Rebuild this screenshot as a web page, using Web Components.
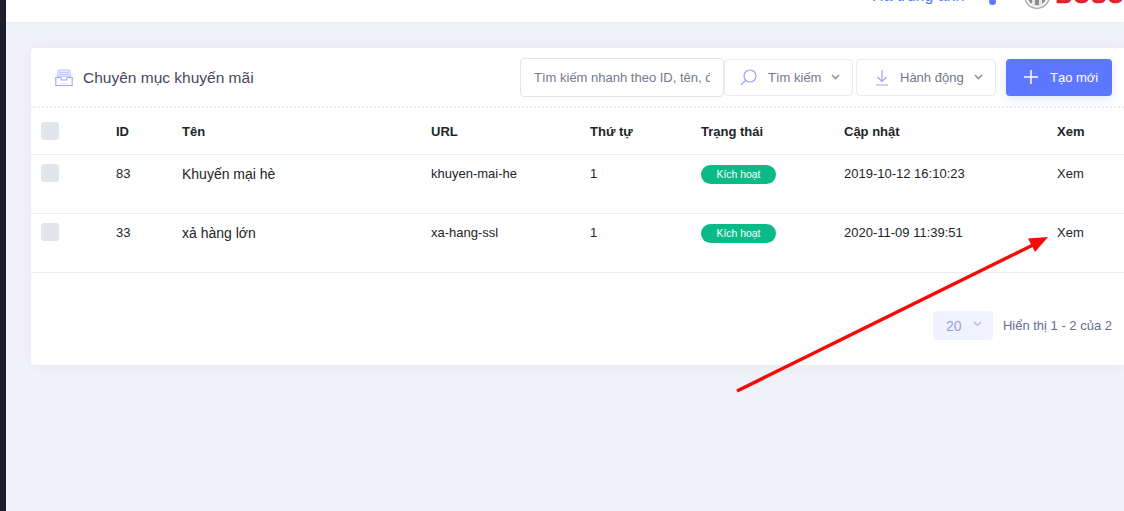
<!DOCTYPE html>
<html lang="vi">
<head>
<meta charset="utf-8">
<title>Chuyên mục khuyến mãi</title>
<style>
    html, body {
        margin: 0;
        height: 100%;
        overflow: hidden;
        font-family: "Liberation Sans", Arial, sans-serif;
        background: #f1f2f7;
    }
</style>
</head>
<body>
<admin-page>
    <top-bar slot="top"></top-bar>
    <promo-card>
        <card-header slot="header"></card-header>
        <promo-table slot="table"></promo-table>
        <page-info slot="footer"></page-info>
    </promo-card>
</admin-page>

<script>
class AdminPage extends HTMLElement {
    constructor() {
        super();
        const shadow = this.attachShadow({ mode: 'open' });
        shadow.innerHTML = /* html */ `
        <style>
            :host {
                display: flex;
                position: relative;
                width: 1124px;
                height: 511px;
                overflow: hidden;
                background: #f1f2f7;
            }
            .rail {
                width: 6px;
                flex: none;
                background: #1e1e2d;
            }
            .main {
                flex: 1;
                min-width: 0;
                display: flex;
                flex-direction: column;
            }
            .content {
                padding: 26px 0 0 25px;
            }
            .arrow {
                position: absolute;
                left: 0;
                top: 0;
                pointer-events: none;
            }
        </style>
        <div class="rail"></div>
        <div class="main">
            <slot name="top"></slot>
            <div class="content"><slot></slot></div>
        </div>
        <svg class="arrow" width="1124" height="511" viewBox="0 0 1124 511">
            <line x1="737" y1="391" x2="1033" y2="245" stroke="#f90808" stroke-width="3.500"/>
            <polygon points="1048,237 1028,238.500 1035,252" fill="#f90808"/>
        </svg>
        `;
    }
}

class TopBar extends HTMLElement {
    constructor() {
        super();
        const shadow = this.attachShadow({ mode: 'open' });
        shadow.innerHTML = /* html */ `
        <style>
            :host {
                display: flex;
                flex: none;
                height: 22px;
                box-sizing: border-box;
                padding-left: 866px;
                overflow: hidden;
                background: #fff;
                align-items: flex-end;
                box-shadow: 0 1px 2px rgba(60, 60, 100, .04);
            }
            .user {
                flex: none;
                font-size: 16px;
                line-height: 16px;
                margin: 0 0 18px 0;
                color: #5d78ff;
                white-space: nowrap;
            }
            .dot {
                width: 7px;
                height: 7px;
                margin: 0 0 17px 24px;
                border-radius: 50%;
                background: #5d78ff;
                flex: none;
            }
            .logo {
                display: flex;
                align-items: flex-end;
                gap: 6px;
                margin: 0 0 13px 28px;
                flex: none;
            }
            .logo span {
                font-size: 23px;
                line-height: 22px;
                font-weight: 700;
                color: #e2202c;
                letter-spacing: .5px;
                margin-bottom: 3px;
                -webkit-text-stroke: .6px #e2202c;
            }
        </style>
        <div class="user">Hà trung anh</div>
        <div class="dot"></div>
        <div class="logo">
            <svg width="26" height="26" viewBox="0 0 26 26">
                <circle cx="13" cy="13" r="12.300" fill="#fff" stroke="#a9a9a9" stroke-width="1.400"/>
                <circle cx="13" cy="13" r="9.500" fill="#8d8d8d"/>
                <rect x="8" y="2" width="3" height="22" fill="#e8e8e8"/>
                <rect x="15" y="2" width="3" height="22" fill="#e8e8e8"/>
                <rect x="8" y="11.500" width="10" height="3" fill="#e8e8e8"/>
            </svg>
            <span>BOSCH</span>
        </div>
        `;
    }
}

class PromoCard extends HTMLElement {
    constructor() {
        super();
        const shadow = this.attachShadow({ mode: 'open' });
        shadow.innerHTML = /* html */ `
        <style>
            :host {
                display: flex;
                flex-direction: column;
                width: 1093px;
                height: 317px;
                background: #fff;
                border-radius: 4px 0 0 4px;
                box-shadow: 0 0 13px rgba(82, 63, 105, .05);
            }
        </style>
        <slot name="header"></slot>
        <slot name="table"></slot>
        <slot name="footer"></slot>
        `;
    }
}

class ToolButton extends HTMLElement {
    constructor() {
        super();
        const shadow = this.attachShadow({ mode: 'open' });
        shadow.innerHTML = /* html */ `
        <style>
            :host {
                display: flex;
                align-items: center;
                box-sizing: border-box;
                height: 37px;
                border: 1px solid #e8ebf5;
                border-radius: 4px;
                background: #fff;
                color: #74788d;
                font-size: 13px;
                white-space: nowrap;
            }
            .icon {
                display: flex;
                margin-right: 10px;
            }
            .caret {
                margin-left: 10px;
            }
        </style>
        <span class="icon"><slot name="icon"></slot></span>
        <slot></slot>
        <svg class="caret" width="9" height="6" viewBox="0 0 9 6" fill="none" stroke="#8f92a3" stroke-width="1.600">
            <path d="M1 1l3.500 3.500L8 1"/>
        </svg>
        `;
    }
}

class CardHeader extends HTMLElement {
    constructor() {
        super();
        const shadow = this.attachShadow({ mode: 'open' });
        shadow.innerHTML = /* html */ `
        <style>
            :host {
                display: flex;
                align-items: center;
                box-sizing: border-box;
                height: 60px;
                padding: 0 0 0 24px;
                border-bottom: 2px dotted #eceef4;
            }
            .title {
                display: flex;
                align-items: center;
                gap: 10px;
                flex: 1;
                padding-top: 1px;
                font-size: 15.500px;
                color: #48465b;
                white-space: nowrap;
            }
            .title svg { flex: none; }
            .search {
                box-sizing: border-box;
                width: 204px;
                height: 39px;
                padding: 0 13px;
                border: 1px solid #e2e5ec;
                border-radius: 4px;
                font: 13px "Liberation Sans", Arial, sans-serif;
                color: #74788d;
                outline: none;
                background: #fff;
            }
            .search::placeholder {
                color: #74788d;
                opacity: 1;
            }
            .find { width: 129px; padding-left: 14px; }
            .act { width: 140px; margin-left: 3px; padding-left: 17px; }
            .create {
                display: flex;
                align-items: center;
                gap: 11px;
                box-sizing: border-box;
                width: 106px;
                height: 37px;
                margin: 0 12px 0 10px;
                padding-left: 17px;
                border: 0;
                border-radius: 4px;
                background: #5d78ff;
                color: #fff;
                font: 13px "Liberation Sans", Arial, sans-serif;
                box-shadow: 0 3px 10px rgba(93, 120, 255, .18);
            }
        </style>
        <div class="title">
            <svg width="18" height="18" viewBox="0 0 18 18" fill="none">
                <path d="M3.500 1h11l1.500 6.500H2z" fill="#e6e9ff" stroke="#c0c8ff"/>
                <path d="M4.500 3.500h9M4 5.500h10" stroke="#c0c8ff"/>
                <path d="M.8 8.500h5l1 2.500h4.400l1-2.500h5v8H.8z" fill="#fff" stroke="#9aa6ff" stroke-width="1.100"/>
                <path d="M5.500 14h7" stroke="#c9cfff" stroke-dasharray="1 1"/>
            </svg>
            Chuyên mục khuyến mãi
        </div>
        <input class="search" placeholder="Tìm kiếm nhanh theo ID, tên, đường dẫn" aria-label="Tìm kiếm">
        <tool-button class="find">
            <svg slot="icon" width="19" height="19" viewBox="0 0 19 19" fill="none" stroke="#99a5f5" stroke-width="1.200">
                <circle cx="11" cy="8" r="6"/>
                <path d="M6.500 12.500L2 17"/>
            </svg>
            Tìm kiếm
        </tool-button>
        <tool-button class="act">
            <svg slot="icon" width="16" height="17" viewBox="0 0 16 17" fill="none" stroke="#99a5f5" stroke-width="1.200">
                <path d="M8 1v11M3.500 8L8 12.500 12.500 8M2 16h12"/>
            </svg>
            Hành động
        </tool-button>
        <button class="create">
            <svg width="16" height="16" viewBox="0 0 16 16" fill="none" stroke="#fff" stroke-width="1.500">
                <path d="M8 1v14M1 8h14"/>
            </svg>
            Tạo mới
        </button>
        `;
    }
}

class StatusPill extends HTMLElement {
    constructor() {
        super();
        const shadow = this.attachShadow({ mode: 'open' });
        shadow.innerHTML = /* html */ `
        <style>
            :host {
                display: flex;
                align-items: center;
                justify-content: center;
                width: 75px;
                height: 19px;
                border-radius: 10px;
                background: #0abb87;
                color: #fff;
                font-size: 10.400px;
            }
        </style>
        <slot></slot>
        `;
    }
}

const rows = [
    { id: 83, name: 'Khuyến mại hè', url: 'khuyen-mai-he', order: 1, date: '2019-10-12 16:10:23' },
    { id: 33, name: 'xả hàng lớn', url: 'xa-hang-ssl', order: 1, date: '2020-11-09 11:39:51' },
];

class PromoTable extends HTMLElement {
    constructor() {
        super();
        const shadow = this.attachShadow({ mode: 'open' });
        shadow.innerHTML = /* html */ `
        <style>
            :host {
                display: block;
                color: #212529;
            }
            .row {
                display: grid;
                grid-template-columns: 75px 66px 249px 159px 111px 143px 213px 1fr;
                box-sizing: border-box;
                padding-left: 10px;
                border-bottom: 1px solid #ebedf2;
                font-size: 13px;
            }
            .head {
                height: 47px;
                align-items: center;
                font-weight: 700;
                color: #212529;
            }
            .body {
                height: 59px;
                padding-top: 10px;
                line-height: 18px;
            }
            .check {
                width: 18px;
                height: 18px;
                border-radius: 3px;
                background: #e2e5ec;
            }
            .body .check {
                margin-top: -1px;
            }
            .name {
                font-size: 14px;
            }
        </style>
        <div class="row head">
            <div class="check"></div>
            <div>ID</div>
            <div>Tên</div>
            <div>URL</div>
            <div>Thứ tự</div>
            <div>Trạng thái</div>
            <div>Cập nhật</div>
            <div>Xem</div>
        </div>
        <div id="rows"></div>
        `;
    }

    connectedCallback() {
        const container = this.shadowRoot.querySelector('#rows');
        container.innerHTML = '';

        rows.forEach(row => {
            const element = document.createElement('div');
            element.classList.add('row', 'body');
            element.innerHTML = `
                <div class="check"></div>
                <div>${row.id}</div>
                <div class="name">${row.name}</div>
                <div>${row.url}</div>
                <div>${row.order}</div>
                <div><status-pill>Kích hoạt</status-pill></div>
                <div>${row.date}</div>
                <div>Xem</div>
            `;
            container.appendChild(element);
        });
    }
}

class PageInfo extends HTMLElement {
    constructor() {
        super();
        const shadow = this.attachShadow({ mode: 'open' });
        shadow.innerHTML = /* html */ `
        <style>
            :host {
                display: flex;
                justify-content: flex-end;
                align-items: center;
                gap: 10px;
                padding: 38px 12px 0 0;
                font-size: 13px;
                color: #646c9a;
            }
            .size {
                display: flex;
                align-items: center;
                box-sizing: border-box;
                width: 60px;
                height: 29px;
                padding-left: 13px;
                border-radius: 4px;
                background: #f0f3ff;
                color: #93a2dd;
                font-size: 14px;
            }
            .size svg { margin: -3px 0 0 12px; }
        </style>
        <div class="size">
            20
            <svg width="9" height="6" viewBox="0 0 9 6" fill="none" stroke="#b4bfe8" stroke-width="1.500">
                <path d="M1 1l3.500 3.500L8 1"/>
            </svg>
        </div>
        <div>Hiển thị 1 - 2 của 2</div>
        `;
    }
}

customElements.define('status-pill', StatusPill);
customElements.define('tool-button', ToolButton);
customElements.define('top-bar', TopBar);
customElements.define('card-header', CardHeader);
customElements.define('promo-table', PromoTable);
customElements.define('page-info', PageInfo);
customElements.define('promo-card', PromoCard);
customElements.define('admin-page', AdminPage);
</script>
</body>
</html>
